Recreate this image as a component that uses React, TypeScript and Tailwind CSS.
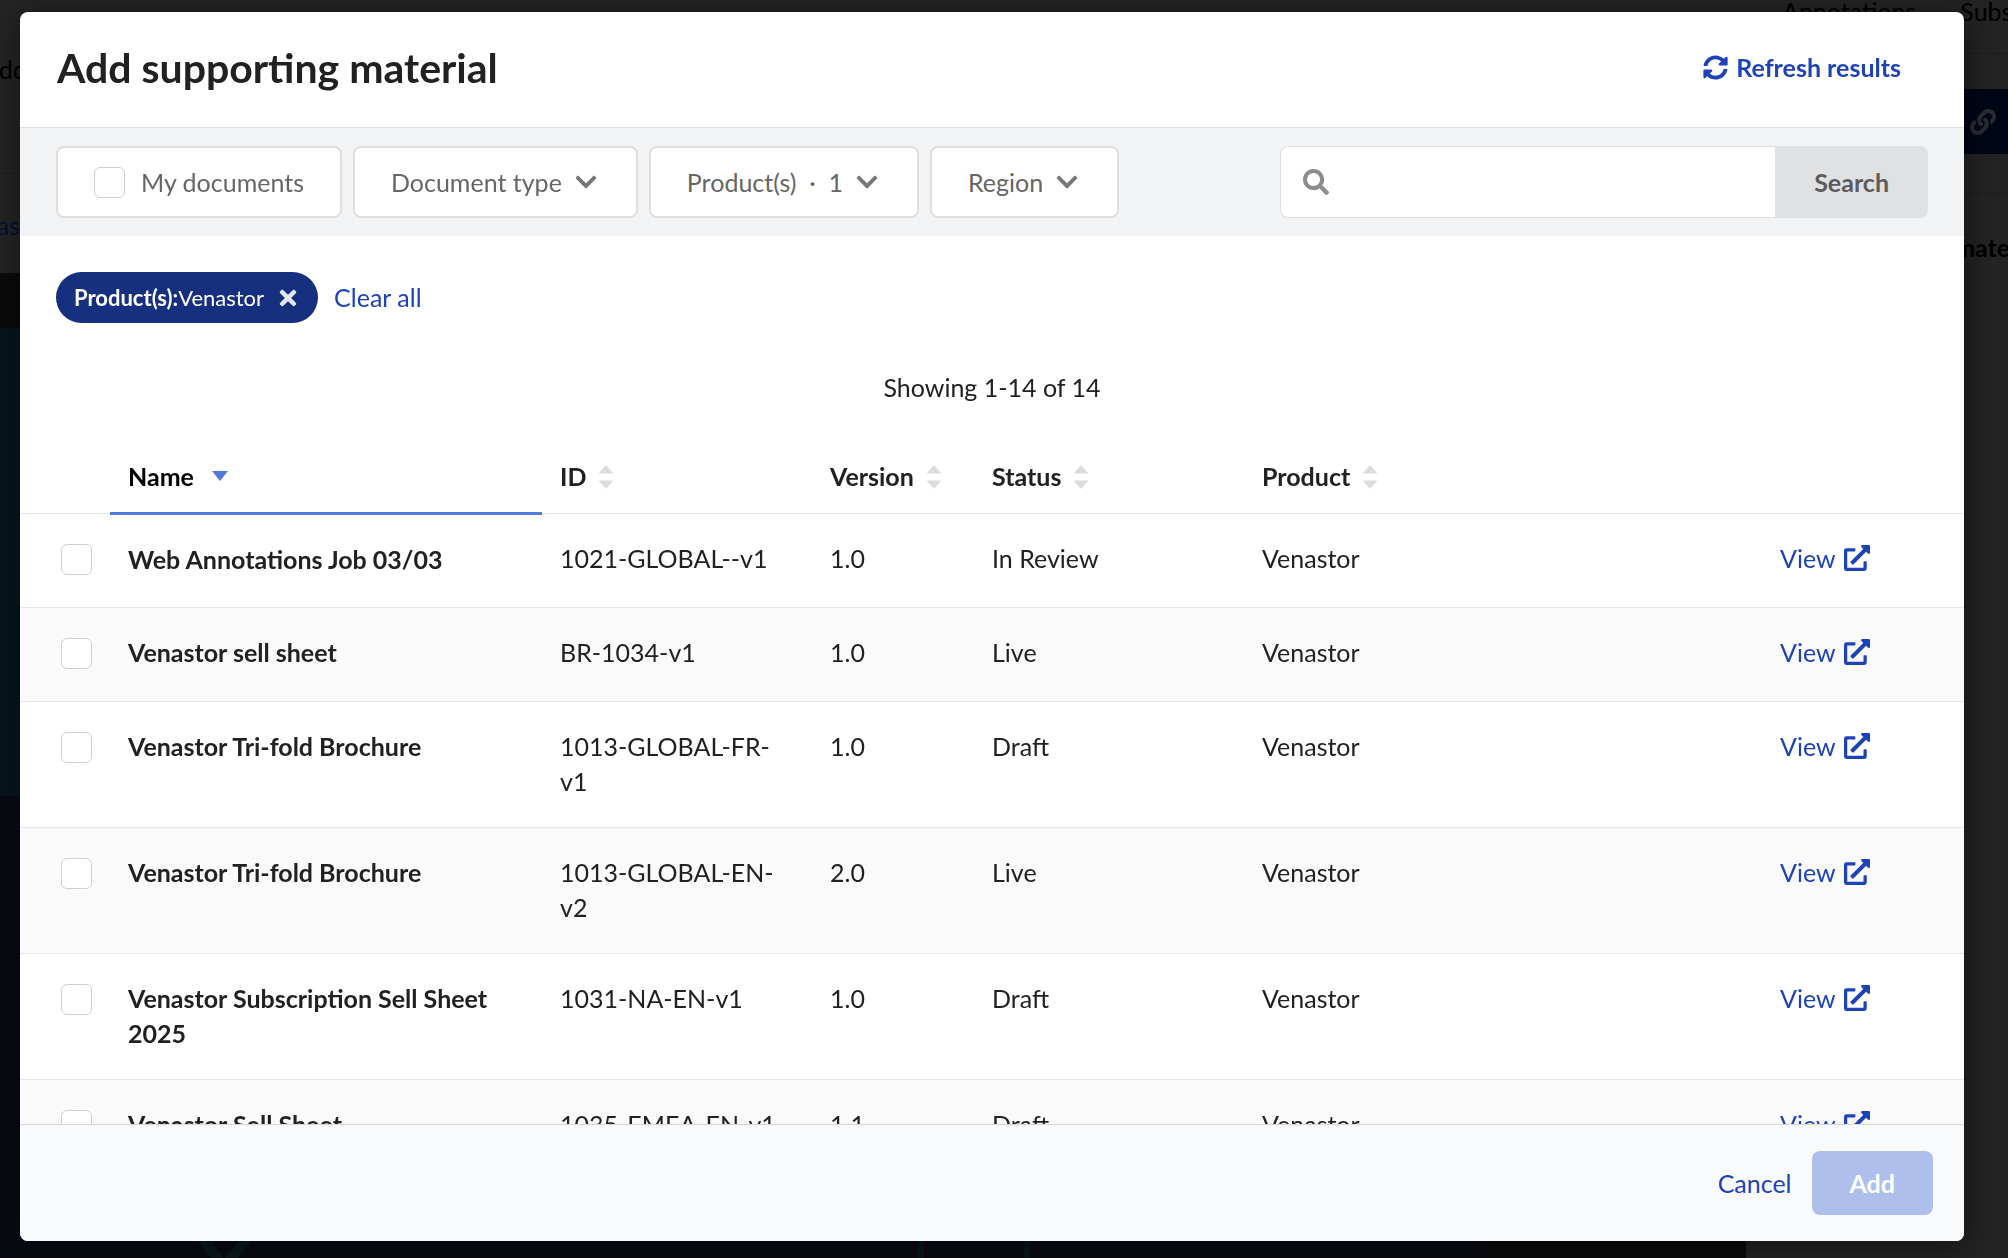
import React, { useState } from "react";
import {
    FaChevronDown,
    FaExternalLinkAlt,
    FaLink,
    FaSearch,
    FaSyncAlt,
    FaTimes,
} from "react-icons/fa";

const documents = [
    { id: "1021-GLOBAL--v1", name: "Web Annotations Job 03/03", version: "1.0", status: "In Review", product: "Venastor" },
    { id: "BR-1034-v1", name: "Venastor sell sheet", version: "1.0", status: "Live", product: "Venastor" },
    { id: "1013-GLOBAL-FR-v1", name: "Venastor Tri-fold Brochure", version: "1.0", status: "Draft", product: "Venastor" },
    { id: "1013-GLOBAL-EN-v2", name: "Venastor Tri-fold Brochure", version: "2.0", status: "Live", product: "Venastor" },
    { id: "1031-NA-EN-v1", name: "Venastor Subscription Sell Sheet 2025", version: "1.0", status: "Draft", product: "Venastor" },
    { id: "1035-EMEA-EN-v1", name: "Venastor Sell Sheet", version: "1.1", status: "Draft", product: "Venastor" },
];

const Checkbox = ({ label }: { label?: string }) => (
    <input
        type="checkbox"
        aria-label={label}
        className="block size-[31px] shrink-0 appearance-none rounded-md border border-[#d0d0d1] bg-white checked:bg-[#1e42b8]"
    />
);

const FilterButton = ({ children }: { children: React.ReactNode }) => (
    <button className="flex h-[72px] items-center gap-3 rounded-lg border-2 border-[#dededf] bg-white pr-[38px] pl-9 text-[#666]">
        {children}
        <FaChevronDown className="size-6 text-[#777]" />
    </button>
);

const SortHeader = ({ children }: { children: React.ReactNode }) => (
    <th className="h-[94px] px-[18px] pt-[22px] font-bold">
        <button className="flex items-center gap-3">
            {children}
            <svg viewBox="0 0 16 24" className="h-6 w-4 fill-[#dcdcdc]">
                <path d="M8 0 15.5 8.5H.5zM8 24 15.5 15.5H.5z" />
            </svg>
        </button>
    </th>
);

// The page behind the dialog, already dimmed
const PageBehind = () => (
    <div className="flex h-screen overflow-hidden bg-[#242424] text-black" aria-hidden="true">
        <div className="flex min-w-0 flex-1 flex-col">
            <div className="flex h-[174px] flex-col justify-start border-b border-[#1d1d1d] pt-[52px]">
                <span className="-ml-[18px]">Add</span>
            </div>
            <div className="h-[99px] pt-[34px] text-[#060f30]">
                <span className="-ml-[22px]">Das</span>
            </div>
            <div className="h-[55px] bg-[#0b0b0b]" />
            <div className="h-[468px] bg-[#07151d]" />
            <div className="flex flex-1 items-end bg-[#0a0a14]">
                <svg viewBox="0 0 1746 18" preserveAspectRatio="xMinYMax" className="h-[18px] w-full">
                    <path d="M1485 0h261v18h-261z" fill="#0b0b0b" />
                    <path d="M197 0h14l12 18h-12zM240 0h12l-14 18h-13z" fill="#0a1a1e" />
                    <path d="M918 0h6v18h-6zM1024 0h6v18h-6z" fill="#0a171c" />
                </svg>
            </div>
        </div>
        <div className="w-[262px]">
            <div className="flex h-[54px] gap-[44px] border-b border-[#1d1d1d] pl-9">
                <span className="-mt-[6px]">Annotations</span>
                <span className="-mt-[6px]">Substances</span>
            </div>
            <div className="mt-[35px] ml-9 flex h-[65px] items-center justify-end bg-[#010617] pr-3">
                <FaLink className="size-[26px] text-[#2b2d33]" />
            </div>
            <div className="mt-[39px] border-t border-[#1d1d1d] pt-9 pl-[79px] font-bold whitespace-nowrap">
                Supporting material
            </div>
        </div>
    </div>
);

const App = () => {
    const [query, setQuery] = useState("");

    return (
        <div className="h-screen overflow-hidden font-[Lato,sans-serif] text-[25px] leading-[35px] text-[#212121]">
            <PageBehind />
            <div className="fixed inset-0 flex pt-3 pr-11 pb-[17px] pl-5">
                <div
                    role="dialog"
                    aria-labelledby="dialog-title"
                    className="flex min-w-0 flex-1 flex-col overflow-hidden rounded-lg bg-white shadow-[2px_6px_30px_4px_rgba(0,0,0,0.4)]"
                >
                    {/* Title */}
                    <header className="flex h-[116px] shrink-0 items-center justify-between border-b border-[#dedfe0] pr-[63px] pb-1 pl-[37px]">
                        <h1 id="dialog-title" className="text-[41px] leading-[52px] font-bold">
                            Add supporting material
                        </h1>
                        <button className="flex items-center gap-2 font-bold text-[#1e42b8]">
                            <FaSyncAlt className="size-[25px]" />
                            Refresh results
                        </button>
                    </header>

                    {/* Filters and search */}
                    <div className="flex shrink-0 items-center gap-[11px] bg-[#f2f3f5] px-9 py-[18px]">
                        <label className="flex h-[72px] items-center gap-4 rounded-lg border-2 border-[#dededf] bg-white px-9 text-[#666]">
                            <Checkbox />
                            My documents
                        </label>
                        <FilterButton>Document type</FilterButton>
                        <FilterButton>
                            <span className="whitespace-pre">Product(s)  ·  1</span>
                        </FilterButton>
                        <FilterButton>Region</FilterButton>
                        <form className="ml-auto flex h-[72px]" onSubmit={(e) => e.preventDefault()}>
                            <label className="flex w-[495px] items-center gap-3 rounded-l-lg border border-r-0 border-[#dedfe0] bg-white px-[22px]">
                                <FaSearch className="size-[26px] shrink-0 text-[#8c8c8c]" />
                                <input
                                    type="text"
                                    aria-label="Search documents"
                                    value={query}
                                    onChange={(e) => setQuery(e.target.value)}
                                    className="min-w-0 flex-1 outline-none"
                                />
                            </label>
                            <button className="rounded-r-lg bg-[#e0e1e2] px-[39px] font-bold text-[#5c5c5d]">
                                Search
                            </button>
                        </form>
                    </div>

                    {/* Results */}
                    <div className="min-h-0 flex-1 overflow-hidden">
                        <div className="flex items-center gap-4 px-9 pt-9">
                            <span className="flex h-[51px] items-center rounded-full bg-[#16307f] px-[18px] text-[22px] text-white">
                                <b>Product(s):</b>Venastor
                                <button aria-label="Remove filter" className="ml-3">
                                    <FaTimes className="size-6 text-[#e3e7f2]" />
                                </button>
                            </span>
                            <button className="text-[#1e42b8]">Clear all</button>
                        </div>
                        <p className="mt-[47px] mb-[14px] text-center">Showing 1-14 of 14</p>

                        <table className="w-full table-fixed border-collapse text-left">
                            <colgroup>
                                <col className="w-[90px]" />
                                <col className="w-[432px]" />
                                <col className="w-[270px]" />
                                <col className="w-[162px]" />
                                <col className="w-[270px]" />
                                <col />
                                <col className="w-[202px]" />
                            </colgroup>
                            <thead>
                                <tr className="border-b border-[#e6e6e7]">
                                    <td />
                                    <th className="border-b-3 border-[#5279dd] px-[18px] pt-[22px] font-bold text-black">
                                        <button className="flex items-center gap-[18px]">
                                            Name
                                            <svg viewBox="0 0 16 10" className="h-[10px] w-4 fill-[#5279dd]">
                                                <path d="M0 0h16L8 10z" />
                                            </svg>
                                        </button>
                                    </th>
                                    <SortHeader>ID</SortHeader>
                                    <SortHeader>Version</SortHeader>
                                    <SortHeader>Status</SortHeader>
                                    <SortHeader>Product</SortHeader>
                                    <td />
                                </tr>
                            </thead>
                            <tbody>
                                {documents.map((doc) => (
                                    <tr key={doc.id} className="h-[94px] border-b border-[#e6e6e7] align-top even:bg-[#fafafa]">
                                        <td className="pt-[30px] pl-[41px]">
                                            <Checkbox label={`Select ${doc.name}`} />
                                        </td>
                                        <td className="px-[18px] pt-[27px] pb-7 font-bold">{doc.name}</td>
                                        <td className="px-[18px] pt-[27px] pb-7">{doc.id}</td>
                                        <td className="px-[18px] pt-[27px] pb-7">{doc.version}</td>
                                        <td className="px-[18px] pt-[27px] pb-7">{doc.status}</td>
                                        <td className="px-[18px] pt-[27px] pb-7">{doc.product}</td>
                                        <td className="px-[18px] pt-[27px] pb-7">
                                            <a href="#" className="flex items-center gap-2 text-[#1e42b8]">
                                                View
                                                <FaExternalLinkAlt className="size-[26px]" />
                                            </a>
                                        </td>
                                    </tr>
                                ))}
                            </tbody>
                        </table>
                    </div>

                    {/* Actions */}
                    <footer className="flex h-[117px] shrink-0 items-center justify-end gap-5 border-t border-[#d6d8da] bg-[#f9fafc] pr-[31px]">
                        <button className="text-[#1e42b8]">Cancel</button>
                        <button className="h-16 rounded-lg bg-[#afbfec] px-[38px] font-bold text-white">Add</button>
                    </footer>
                </div>
            </div>
        </div>
    );
};

export default App;
